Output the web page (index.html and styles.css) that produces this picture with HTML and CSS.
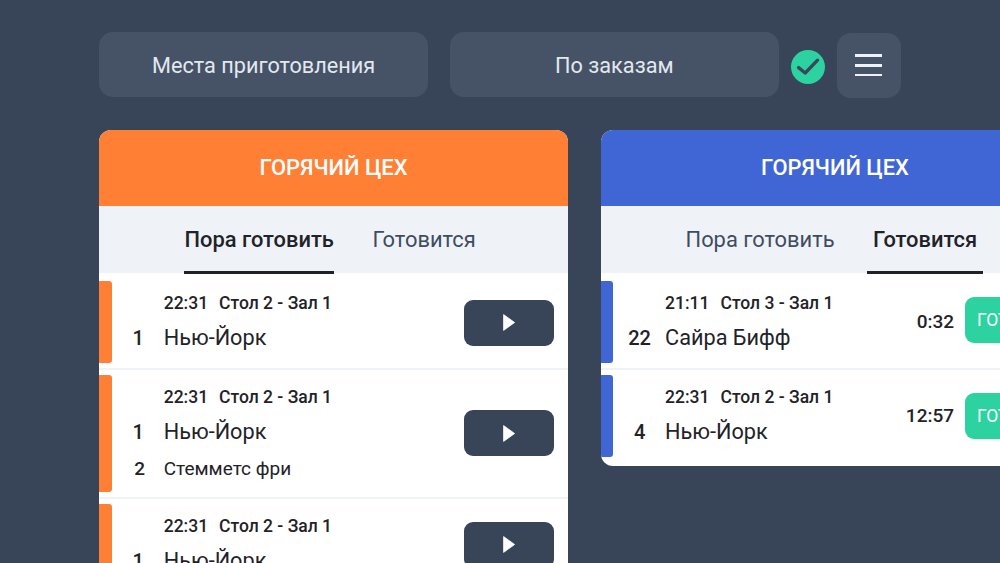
FILE: index.html
```html
<!DOCTYPE html>
<html lang="en">
<head>
  <meta charset="UTF-8">
  <meta name="viewport" content="width=device-width, initial-scale=1.0">
  <title>Горячий цех</title>
  <link rel="stylesheet" href="styles.css">
</head>
<body>
  <div class="topbar">
    <div class="filter">Места приготовления</div>
    <div class="filter">По заказам</div>
    <svg class="status" viewBox="0 0 34 34">
      <circle cx="17" cy="17" r="17" fill="#2cd3a0"/>
      <path d="M7.6 17.6 L14.2 23 L26.6 10.2" fill="none" stroke="#3a4659" stroke-width="3.3" stroke-linecap="round" stroke-linejoin="round"/>
    </svg>
    <div class="menu">
      <span></span>
      <span></span>
      <span></span>
    </div>
  </div>

  <div class="board">
    <div class="panel">
      <div class="panel-title orange">Горячий цех</div>
      <div class="tabs">
        <div class="tab active">Пора готовить</div>
        <div class="tab">Готовится</div>
      </div>
      <div class="list">
        <div class="item">
          <div class="bar orange"></div>
          <div class="order">
            <div class="meta"><span>22:31</span><span>Стол 2 - Зал 1</span></div>
            <div class="dish"><span class="qty">1</span>Нью-Йорк</div>
          </div>
          <button class="play"><svg viewBox="0 0 12 17"><path d="M0.6 0.6 L11.6 8.5 L0.6 16.4 Z" fill="#fff" stroke="#fff" stroke-width="0.8" stroke-linejoin="round"/></svg></button>
        </div>
        <div class="item">
          <div class="bar orange"></div>
          <div class="order">
            <div class="meta"><span>22:31</span><span>Стол 2 - Зал 1</span></div>
            <div class="dish"><span class="qty">1</span>Нью-Йорк</div>
            <div class="dish extra"><span class="qty">2</span>Стемметс фри</div>
          </div>
          <button class="play"><svg viewBox="0 0 12 17"><path d="M0.6 0.6 L11.6 8.5 L0.6 16.4 Z" fill="#fff" stroke="#fff" stroke-width="0.8" stroke-linejoin="round"/></svg></button>
        </div>
        <div class="item">
          <div class="bar orange"></div>
          <div class="order">
            <div class="meta"><span>22:31</span><span>Стол 2 - Зал 1</span></div>
            <div class="dish"><span class="qty">1</span>Нью-Йорк</div>
          </div>
          <button class="play"><svg viewBox="0 0 12 17"><path d="M0.6 0.6 L11.6 8.5 L0.6 16.4 Z" fill="#fff" stroke="#fff" stroke-width="0.8" stroke-linejoin="round"/></svg></button>
        </div>
      </div>
    </div>

    <div class="panel">
      <div class="panel-title blue">Горячий цех</div>
      <div class="tabs">
        <div class="tab">Пора готовить</div>
        <div class="tab active">Готовится</div>
      </div>
      <div class="list">
        <div class="item">
          <div class="bar blue"></div>
          <div class="order">
            <div class="meta"><span>21:11</span><span>Стол 3 - Зал 1</span></div>
            <div class="dish"><span class="qty">22</span>Сайра Бифф</div>
          </div>
          <div class="timer">0:32</div>
          <button class="done">Готово</button>
        </div>
        <div class="item">
          <div class="bar blue"></div>
          <div class="order">
            <div class="meta"><span>22:31</span><span>Стол 2 - Зал 1</span></div>
            <div class="dish"><span class="qty">4</span>Нью-Йорк</div>
          </div>
          <div class="timer">12:57</div>
          <button class="done">Готово</button>
        </div>
      </div>
    </div>
  </div>
</body>
</html>
```

FILE: styles.css
```css
html, body {
  height: 100%;
}

body {
  margin: 0;
  overflow: hidden;
  background-color: #384457;
  font-family: Roboto, "Liberation Sans", sans-serif;
  color: #1f2328;
}

.topbar {
  display: flex;
  align-items: flex-start;
  padding: 32px 0 0 99.3px;
}

.filter {
  width: 328.7px;
  height: 65px;
  margin-right: 22px;
  border-radius: 14px;
  background-color: #465366;
  color: #e2e8f0;
  font-size: 21.7px;
  line-height: 67px;
  text-align: center;
}

.filter + .filter {
  margin-right: 12.4px;
}

.status {
  width: 34px;
  height: 34px;
  margin: 18px 11.6px 0 0;
}

.menu {
  display: flex;
  flex-direction: column;
  justify-content: center;
  gap: 7px;
  box-sizing: border-box;
  width: 64.3px;
  height: 65px;
  margin-top: 0.7px;
  padding: 0 18.5px;
  border-radius: 14px;
  background-color: #465366;
}

.menu span {
  height: 2.7px;
  background-color: #eef2f8;
}

.board {
  display: flex;
  align-items: flex-start;
  gap: 33px;
  padding: 32.3px 0 0 99.3px;
}

.panel {
  flex: 0 0 468.4px;
  overflow: hidden;
  border-radius: 12px;
  background-color: #fff;
}

.orange {
  background-color: #ff8035;
}

.blue {
  background-color: #4066d6;
}

.panel-title {
  height: 76px;
  color: #fff;
  font-size: 21.9px;
  font-weight: 500;
  line-height: 76px;
  text-align: center;
  text-transform: uppercase;
}

.tabs {
  display: flex;
  justify-content: flex-end;
  gap: 32.5px;
  box-sizing: border-box;
  height: 67.5px;
  padding-right: 86px;
  background-color: #eff3f8;
}

.tab {
  padding: 0 6px;
  color: #3f4c60;
  font-size: 21.9px;
  line-height: 68px;
}

.tab.active {
  margin-bottom: -1px;
  border-bottom: 3px solid #1f2328;
  color: #1f2328;
  font-weight: 500;
}

.tabs .tab:first-child {
  padding: 0;
}

.list {
  padding-top: 2.5px;
}

.item {
  display: flex;
  align-items: center;
  padding: 5px 14px 5px 0;
  border-bottom: 2px solid #eff3f8;
}

.item:last-child {
  border-bottom: 0;
  padding-bottom: 9px;
}

.bar {
  flex: 0 0 12.4px;
  align-self: stretch;
  border-radius: 0 3px 3px 0;
}

.order {
  flex: 1;
  padding: 10.5px 0 8.5px 15px;
}

.meta {
  display: flex;
  gap: 11px;
  margin-left: 37px;
  font-size: 17.5px;
  font-weight: 500;
  line-height: 24px;
}

.dish {
  display: flex;
  margin-top: 7px;
  font-size: 21.7px;
  line-height: 32px;
}

.dish.extra {
  margin-top: 8px;
  margin-bottom: 1px;
  font-size: 19px;
  line-height: 26px;
}

.qty {
  flex: 0 0 23px;
  margin-right: 14px;
  font-size: 20px;
  font-weight: 500;
  text-align: center;
}

.extra .qty {
  flex-basis: 26px;
  margin-right: 11px;
  font-size: 19px;
}

.play {
  display: flex;
  align-items: center;
  justify-content: center;
  width: 90px;
  height: 46px;
  padding: 0;
  border: 0;
  border-radius: 9px;
  background-color: #384457;
}

.play svg {
  width: 12px;
  height: 17px;
}

.item:first-child .play {
  margin-top: 2px;
}

.timer {
  margin-right: 11px;
  font-size: 19px;
  font-weight: 500;
}

.done {
  flex: 0 0 90px;
  height: 46px;
  padding: 0;
  border: 0;
  border-radius: 9px;
  background-color: #2cd3a0;
  color: #fff;
  font-family: inherit;
  font-size: 17.5px;
  text-transform: uppercase;
}

.item:first-child .done {
  margin-bottom: 4px;
}
```
